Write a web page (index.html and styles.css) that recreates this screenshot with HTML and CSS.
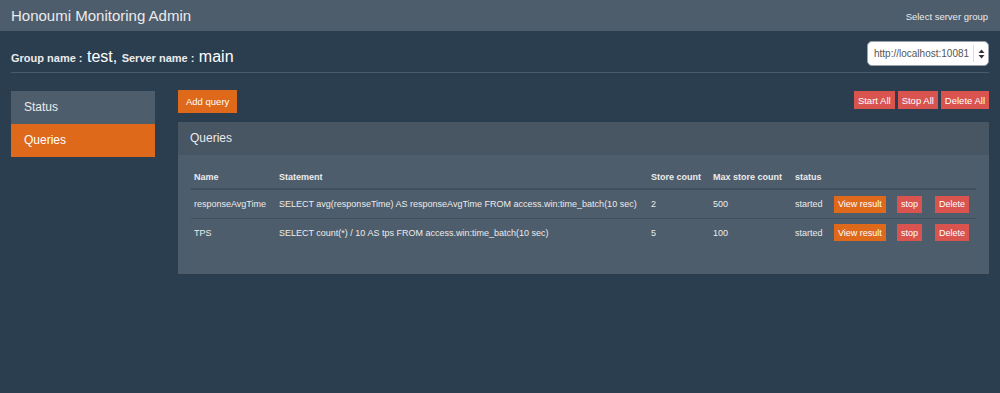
FILE: index.html
```html
<!DOCTYPE html>
<html lang="en">
<head>
    <meta charset="UTF-8">
    <meta name="viewport" content="width=device-width, initial-scale=1.0">
    <title>Honoumi Monitoring Admin</title>
    <link rel="stylesheet" href="styles.css">
</head>
<body>
    <nav class="navbar">
        <span class="brand">Honoumi Monitoring Admin</span>
        <span class="nav-right">Select server group</span>
    </nav>

    <div class="container">
        <div class="page-header">
            <h1 class="title">
                <small>Group name :</small> test, <small>Server name :</small> main
            </h1>
            <div class="select-box">
                <span class="select-value">http://localhost:10081</span>
                <span class="select-arrows">
                    <svg width="7" height="10" viewBox="0 0 7 10">
                        <path d="M0.5 4 L3.5 0.5 L6.5 4 Z" fill="#333"/>
                        <path d="M0.5 6 L3.5 9.5 L6.5 6 Z" fill="#333"/>
                    </svg>
                </span>
            </div>
        </div>

        <div class="layout">
            <ul class="side-nav">
                <li class="side-item">Status</li>
                <li class="side-item active">Queries</li>
            </ul>

            <div class="main">
                <div class="toolbar">
                    <button class="btn btn-orange btn-add">Add query</button>
                    <div class="toolbar-right">
                        <button class="btn btn-red">Start All</button>
                        <button class="btn btn-red">Stop All</button>
                        <button class="btn btn-red">Delete All</button>
                    </div>
                </div>

                <div class="panel">
                    <div class="panel-heading">Queries</div>
                    <div class="panel-body">
                        <table class="query-table">
                            <colgroup>
                                <col style="width: 85px">
                                <col style="width: 372px">
                                <col style="width: 62px">
                                <col style="width: 82px">
                                <col style="width: 39px">
                                <col style="width: 63px">
                                <col style="width: 38px">
                                <col>
                            </colgroup>
                            <thead>
                                <tr>
                                    <th>Name</th>
                                    <th>Statement</th>
                                    <th>Store count</th>
                                    <th>Max store count</th>
                                    <th>status</th>
                                    <th></th>
                                    <th></th>
                                    <th></th>
                                </tr>
                            </thead>
                            <tbody>
                                <tr>
                                    <td>responseAvgTime</td>
                                    <td>SELECT avg(responseTime) AS responseAvgTime FROM access.win:time_batch(10 sec)</td>
                                    <td>2</td>
                                    <td>500</td>
                                    <td>started</td>
                                    <td><button class="btn btn-orange btn-sm">View result</button></td>
                                    <td><button class="btn btn-red btn-sm">stop</button></td>
                                    <td><button class="btn btn-red btn-sm">Delete</button></td>
                                </tr>
                                <tr>
                                    <td>TPS</td>
                                    <td>SELECT count(*) / 10 AS tps FROM access.win:time_batch(10 sec)</td>
                                    <td>5</td>
                                    <td>100</td>
                                    <td>started</td>
                                    <td><button class="btn btn-orange btn-sm">View result</button></td>
                                    <td><button class="btn btn-red btn-sm">stop</button></td>
                                    <td><button class="btn btn-red btn-sm">Delete</button></td>
                                </tr>
                            </tbody>
                        </table>
                    </div>
                </div>
            </div>
        </div>
    </div>
</body>
</html>
```

FILE: styles.css
```css
body {
    font-family: 'Liberation Sans', Arial, sans-serif;
    margin: 0;
    padding: 0;
    background-color: #2b3e50;
    color: #ebebeb;
    height: 393px;
    overflow: hidden;
}

.navbar {
    background-color: #4e5d6c;
    height: 31px;
    display: flex;
    align-items: center;
    justify-content: space-between;
    padding: 0 12px 0 11px;
    box-sizing: border-box;
}

.brand {
    font-size: 15px;
    color: #ebebeb;
}

.nav-right {
    font-size: 9.5px;
    color: #ebebeb;
    margin-top: 1px;
}

.container {
    padding: 0 11px;
}

.page-header {
    display: flex;
    justify-content: space-between;
    align-items: center;
    height: 42px;
    box-sizing: border-box;
    padding-top: 6px;
    border-bottom: 1px solid #485c6e;
}

.title {
    margin: 0;
    font-size: 16px;
    font-weight: normal;
    color: #ffffff;
    margin-top: 4px;
}

.title small {
    font-size: 11px;
    font-weight: bold;
    color: #ebebeb;
}

.select-box {
    width: 122px;
    height: 25px;
    box-sizing: border-box;
    background-color: #ffffff;
    border-radius: 5px;
    border: 1px solid #9aa3ac;
    display: flex;
    align-items: center;
    margin-top: -2px;
}

.select-value {
    flex: 1;
    font-size: 10px;
    color: #555;
    padding-left: 6px;
}

.select-arrows {
    width: 14px;
    height: 17px;
    border-left: 1px solid #ddd;
    display: flex;
    align-items: center;
    justify-content: center;
}

.layout {
    display: flex;
    gap: 23px;
    margin-top: 17px;
}

.side-nav {
    list-style: none;
    margin: 0;
    padding: 0;
    width: 144px;
    flex-shrink: 0;
    margin-top: 1px;
}

.side-item {
    height: 33px;
    line-height: 33px;
    padding-left: 13px;
    font-size: 12px;
    background-color: #4e5d6c;
    color: #ebebeb;
}

.side-item.active {
    background-color: #df691a;
    color: #ffffff;
}

.main {
    flex: 1;
}

.toolbar {
    display: flex;
    justify-content: space-between;
    align-items: flex-start;
}

.toolbar-right {
    display: flex;
    gap: 3px;
    margin-top: 1px;
}

.btn {
    font-family: 'Liberation Sans', Arial, sans-serif;
    border: none;
    border-radius: 0;
    color: #ffffff;
    font-size: 9.5px;
    height: 18px;
    padding: 0 4px;
    cursor: pointer;
}

.btn-orange {
    background-color: #df691a;
}

.btn-red {
    background-color: #d9534f;
}

.btn-add {
    height: 23px;
    padding: 0 8px;
}

.btn-sm {
    height: 17px;
    font-size: 9px;
    padding: 0 4px;
}

.panel {
    margin-top: 9px;
    background-color: #4e5d6c;
}

.panel-heading {
    background-color: #485563;
    height: 33px;
    line-height: 33px;
    padding-left: 12px;
    font-size: 12px;
    color: #ebebeb;
}

.panel-body {
    padding: 11px 13px 28px;
}

.query-table {
    width: 100%;
    border-collapse: collapse;
    table-layout: fixed;
    font-size: 9px;
}

.query-table th {
    text-align: left;
    font-weight: bold;
    height: 22px;
    padding: 0 3px;
    border-bottom: 2px solid #3f4f5e;
}

.query-table td {
    height: 27px;
    padding: 0 3px;
    border-top: 1px solid #3f4f5e;
    white-space: nowrap;
}

.query-table tbody tr:first-child td {
    border-top: none;
}

.query-table tbody tr:first-child td {
    height: 28px;
}
```
